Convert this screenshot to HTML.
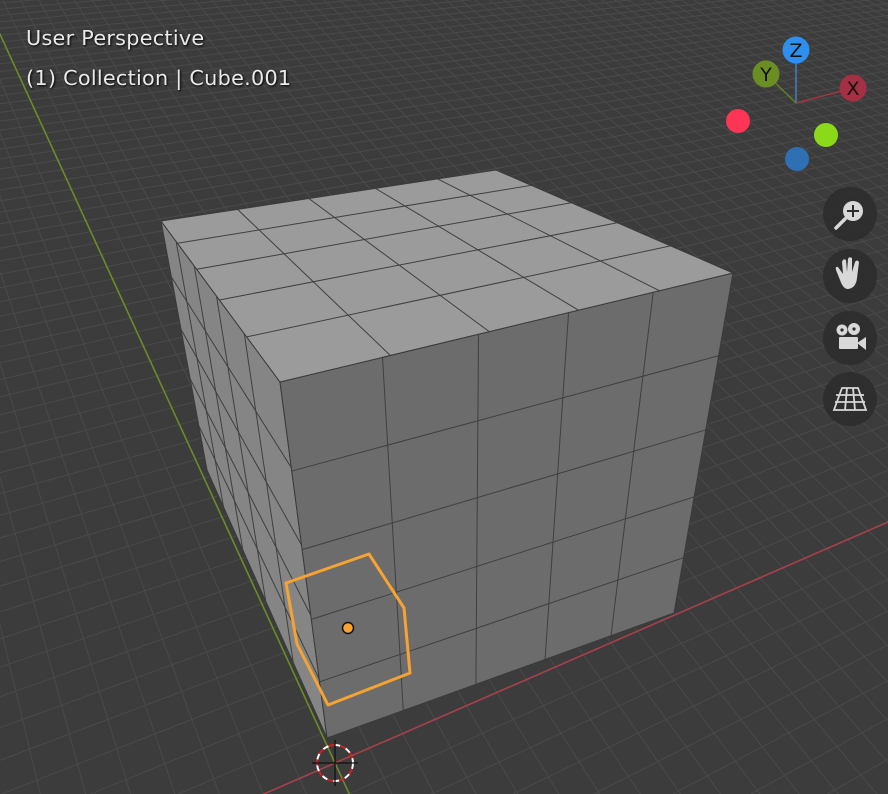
<!DOCTYPE html>
<html><head><meta charset="utf-8">
<style>
html,body{margin:0;padding:0;background:#3c3c3c;width:888px;height:794px;overflow:hidden;position:relative}
svg{display:block;position:absolute;left:0;top:0}
.t{font-family:"DejaVu Sans","Liberation Sans",sans-serif;font-size:20.8px;fill:#eaeaea;letter-spacing:0.25px}
</style></head><body>
<svg id="s" width="888" height="794" viewBox="0 0 888 794" xmlns="http://www.w3.org/2000/svg" overflow="hidden">
<rect width="888" height="794" fill="#3c3c3c"/>
<g id="floor" stroke="#4a4a4a" stroke-width="1" fill="none"></g>
<g id="axes" fill="none"></g>
<g id="cube"></g>
<g id="sel">
<polygon points="286,583 369,554 404,608 410,673 328,705 297,644" fill="none" stroke="#f6a331" stroke-width="3" stroke-linejoin="round"/>
<circle cx="348" cy="628" r="5.5" fill="#f6a331" stroke="#111" stroke-width="1.5"/>
</g>
<g id="cursor">
<circle cx="335" cy="763" r="18" fill="none" stroke="#fff" stroke-width="2" stroke-dasharray="6 6"/>
<circle cx="335" cy="763" r="18" fill="none" stroke="#d02020" stroke-width="2" stroke-dasharray="6 6" stroke-dashoffset="6"/>
<line x1="335" y1="740" x2="335" y2="786" stroke="#111" stroke-width="1.3"/>
<line x1="312" y1="763" x2="358" y2="763" stroke="#111" stroke-width="1.3"/>
</g>
<g font-family="DejaVu Sans, Liberation Sans, sans-serif">
<line x1="796" y1="103" x2="796" y2="50" stroke="#4a8fd8" stroke-width="1.2"/>
<line x1="796" y1="103" x2="766" y2="74" stroke="#6a8f1f" stroke-width="1.2"/>
<line x1="796" y1="103" x2="853" y2="88" stroke="#b03345" stroke-width="1.2"/>
<circle cx="738" cy="121" r="12" fill="#fe3555"/>
<circle cx="826" cy="135" r="12" fill="#8cd91a"/>
<circle cx="797" cy="159" r="12" fill="#2f6fb3"/>
<circle cx="796" cy="50" r="13.5" fill="#2e8ef2"/>
<circle cx="766" cy="74" r="13.5" fill="#6b8e22"/>
<circle cx="853" cy="88" r="13.5" fill="#a63043"/>
<text x="796" y="57" font-size="19" text-anchor="middle" fill="#111">Z</text>
<text x="766" y="81" font-size="19" text-anchor="middle" fill="#111">Y</text>
<text x="853" y="95" font-size="19" text-anchor="middle" fill="#111">X</text>
</g>
<g>
<circle cx="850" cy="214" r="27" fill="#2c2c2c" fill-opacity="0.85"/>
<circle cx="850" cy="276" r="27" fill="#2c2c2c" fill-opacity="0.85"/>
<circle cx="850" cy="338" r="27" fill="#2c2c2c" fill-opacity="0.85"/>
<circle cx="850" cy="399" r="27" fill="#2c2c2c" fill-opacity="0.85"/>
<circle cx="853" cy="211" r="10" fill="#d8d8d8"/>
<line x1="845" y1="219" x2="836" y2="228" stroke="#d8d8d8" stroke-width="3.5" stroke-linecap="round"/>
<line x1="853" y1="205" x2="853" y2="217" stroke="#2c2c2c" stroke-width="2"/>
<line x1="847" y1="211" x2="859" y2="211" stroke="#2c2c2c" stroke-width="2"/>
<path d="M840 280 L836 270 Q835 266 838 267 L843 274 L842 262 Q843 258 846 260 L847 272 L848 259 Q849 256 852 258 L852 272 L855 262 Q857 259 859 262 L857 278 Q856 288 848 289 Q843 289 840 280 Z" fill="#d8d8d8"/>
<circle cx="842" cy="330" r="5.5" fill="#d8d8d8"/>
<circle cx="854" cy="329" r="6" fill="#d8d8d8"/>
<circle cx="842" cy="330" r="1.6" fill="#2c2c2c"/>
<circle cx="854" cy="329" r="1.6" fill="#2c2c2c"/>
<rect x="839" y="337" width="19" height="12" rx="1" fill="#d8d8d8"/>
<polygon points="857,343 866,337 866,350" fill="#d8d8d8"/>
<g stroke="#d8d8d8" stroke-width="1.8" fill="none">
<polygon points="842,388 858,388 866,410 834,410"/>
<line x1="836" y1="395" x2="864" y2="395"/>
<line x1="835" y1="402" x2="865" y2="402"/>
<line x1="847" y1="388" x2="845" y2="410"/>
<line x1="853" y1="388" x2="855" y2="410"/>
</g>
</g>
<g style="filter:drop-shadow(1px 1px 1px #000)">
<text class="t" x="26" y="45">User Perspective</text>
<text class="t" x="26" y="85">(1) Collection | Cube.001</text>
</g>
</svg>
<script>
var NS="http://www.w3.org/2000/svg";
function el(p,t,a){var e=document.createElementNS(NS,t);for(var k in a)e.setAttribute(k,a[k]);p.appendChild(e);return e;}
var O=[335,763],VR=[2600,-224],VG=[-292,-601],al=0.0154,be=0.022;
function F(u,v){var w=1+al*u+be*v;return [(O[0]+u*al*VR[0]+v*be*VG[0])/w,(O[1]+u*al*VR[1]+v*be*VG[1])/w];}
var fl=document.getElementById('floor');
for(var u=-24;u<=200;u++){var a=F(u,-14),b=F(u,400);el(fl,'line',{x1:a[0].toFixed(1),y1:a[1].toFixed(1),x2:b[0].toFixed(1),y2:b[1].toFixed(1)});}
for(var v=-14;v<=200;v++){var a=F(-24,v),b=F(400,v);el(fl,'line',{x1:a[0].toFixed(1),y1:a[1].toFixed(1),x2:b[0].toFixed(1),y2:b[1].toFixed(1)});}
var ax=document.getElementById('axes');
var a=F(-24,0),b=F(400,0);el(ax,'line',{x1:a[0],y1:a[1],x2:b[0],y2:b[1],stroke:'#a8404c','stroke-width':1.6});
a=F(0,-14);b=F(0,400);el(ax,'line',{x1:a[0],y1:a[1],x2:b[0],y2:b[1],stroke:'#6d8a2a','stroke-width':1.6});
function Q(p){var x0=p[0][0],y0=p[0][1],x1=p[1][0],y1=p[1][1],x2=p[2][0],y2=p[2][1],x3=p[3][0],y3=p[3][1];
var dx1=x1-x2,dx2=x3-x2,dx3=x0-x1+x2-x3,dy1=y1-y2,dy2=y3-y2,dy3=y0-y1+y2-y3;
var den=dx1*dy2-dx2*dy1,g=(dx3*dy2-dx2*dy3)/den,h=(dx1*dy3-dx3*dy1)/den;
var A=x1-x0+g*x1,B=x3-x0+h*x3,D=y1-y0+g*y1,E=y3-y0+h*y3;
return function(u,v){var w=g*u+h*v+1;return [(A*u+B*v+x0)/w,(D*u+E*v+y0)/w];};}
var cb=document.getElementById('cube');
function face(p,fill,n){var m=Q(p);
el(cb,'polygon',{points:p.map(function(q){return q.join(',')}).join(' '),fill:fill,stroke:'#3a3a3a','stroke-width':1,'stroke-linejoin':'round'});
for(var i=1;i<n;i++){var t=i/n;var a=m(t,0),b=m(t,1);el(cb,'line',{x1:a[0],y1:a[1],x2:b[0],y2:b[1],stroke:'#3f3f3f','stroke-width':1});
a=m(0,t);b=m(1,t);el(cb,'line',{x1:a[0],y1:a[1],x2:b[0],y2:b[1],stroke:'#3f3f3f','stroke-width':1});}}
face([[280,382],[161,221],[207,470],[327,738]],'#858585',5);
face([[280,382],[733,273],[674,613],[327,738]],'#6c6c6c',5);
face([[280,382],[733,273],[496,170],[161,221]],'#9b9b9b',5);
</script>
</body></html>
